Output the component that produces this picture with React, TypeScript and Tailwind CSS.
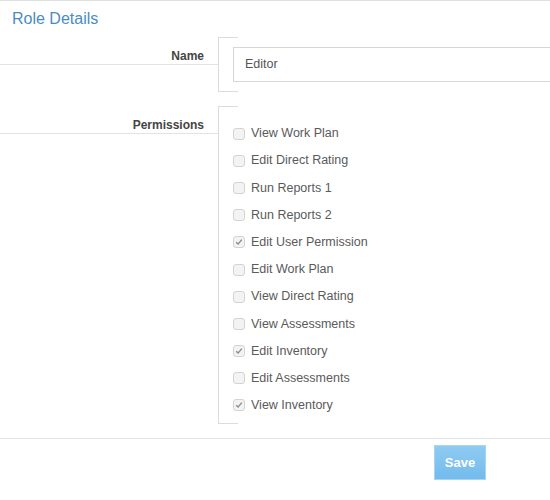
import React from "react";

const permissions: { label: string; checked: boolean }[] = [
  { label: "View Work Plan", checked: false },
  { label: "Edit Direct Rating", checked: false },
  { label: "Run Reports 1", checked: false },
  { label: "Run Reports 2", checked: false },
  { label: "Edit User Permission", checked: true },
  { label: "Edit Work Plan", checked: false },
  { label: "View Direct Rating", checked: false },
  { label: "View Assessments", checked: false },
  { label: "Edit Inventory", checked: true },
  { label: "Edit Assessments", checked: false },
  { label: "View Inventory", checked: true },
];

function Box({ checked }: { checked: boolean }) {
  return (
    <span className="flex h-[12px] w-[12px] items-center justify-center rounded-[3px] border border-[#d3d3d3] bg-[#f3f3f3]">
      {checked && (
        <svg width="8" height="8" viewBox="0 0 8 8">
          <path d="M1.2 4.3 L3.1 6.1 L6.8 1.6" fill="none" stroke="#8a8a8a" strokeWidth="1.4" />
        </svg>
      )}
    </span>
  );
}

// label column with its underline, right column with the bracket ticks
function Group({ label, labelPad, children }: { label: string; labelPad: string; children: React.ReactNode }) {
  return (
    <div className="flex">
      <div className="w-[218px] shrink-0">
        <div className={`border-b border-[#e3e3e3] pr-[14px] text-right text-[12px] font-bold text-[#444] ${labelPad}`}>
          {label}
        </div>
      </div>
      <div className="flex-1 border-l border-[#dcdcdc]">
        <div className="w-[19px] border-t border-[#dcdcdc]" />
        {children}
        <div className="w-[19px] border-t border-[#dcdcdc]" />
      </div>
    </div>
  );
}

export default function App() {
  return (
    <div
      className="h-[500px] w-[550px] overflow-hidden border-t border-[#e0e0e0] bg-white"
      style={{ fontFamily: '"Liberation Sans", Arial, sans-serif' }}
    >
      <div className="px-[12px] pt-[9px] pb-[9px] text-[16px] leading-[18px] text-[#4a8cc2]">Role Details</div>

      <Group label="Name" labelPad="pt-[12px] pb-[1px] leading-[14px]">
        <div className="py-[9px] pl-[14px]">
          <div className="flex h-[35px] w-[340px] items-center border border-[#d6d6d6] pl-[11px] text-[12.5px] text-[#555]">
            Editor
          </div>
        </div>
      </Group>

      <div className="h-[14px]" />

      <Group label="Permissions" labelPad="pt-[12px] pb-[1px] leading-[14px]">
        <ul className="pt-[13px] pb-[4px] pl-[14px]">
          {permissions.map((p) => (
            <li key={p.label} className="flex h-[27.2px] items-center gap-[6px] text-[12.5px] text-[#5a5a5a]">
              <Box checked={p.checked} />
              {p.label}
            </li>
          ))}
        </ul>
      </Group>

      <div className="mt-[14px] border-t border-[#e3e3e3]" />

      <div className="flex pt-[6px] pl-[434px]">
        <button className="h-[35px] w-[52px] border border-[#a9d5f5] bg-gradient-to-b from-[#8fcbf3] to-[#72bbed] text-[13px] font-bold text-white">
          Save
        </button>
      </div>
    </div>
  );
}
